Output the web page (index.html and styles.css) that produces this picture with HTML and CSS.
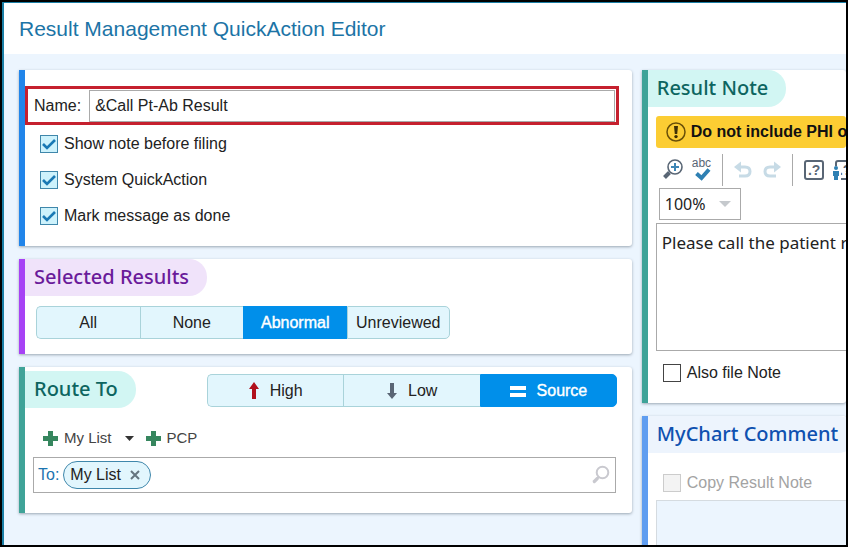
FILE: index.html
```html
<!DOCTYPE html>
<html lang="en">
<head>
<meta charset="utf-8">
<title>Result Management QuickAction Editor</title>
<link rel="stylesheet" href="styles.css">
</head>
<body>
<div class="window">
  <header class="titlebar"><h1>Result Management QuickAction Editor</h1></header>
  <main class="columns">
    <div class="column">
      <section class="panel panel-blue general">
        <div class="name-row">
          <label for="name">Name:</label>
          <input id="name" class="name-input" type="text" value="&amp;Call Pt-Ab Result">
        </div>
        <div class="checks">
          <label class="check"><input type="checkbox" checked>Show note before filing</label>
          <label class="check"><input type="checkbox" checked>System QuickAction</label>
          <label class="check"><input type="checkbox" checked>Mark message as done</label>
        </div>
      </section>

      <section class="panel panel-purple results">
        <h2 class="tag">Selected Results</h2>
        <div class="segments result-segments">
          <button type="button">All</button>
          <button type="button">None</button>
          <button type="button" class="active">Abnormal</button>
          <button type="button">Unreviewed</button>
        </div>
      </section>

      <section class="panel panel-teal route">
        <div class="route-head">
          <h2 class="tag">Route To</h2>
          <div class="segments route-segments">
            <button type="button"><svg width="10" height="18" viewBox="0 0 10 18"><path fill="#b0101c" d="M5 0l5 7H7v10H3V7H0z"/></svg>High</button>
            <button type="button"><svg width="10" height="18" viewBox="0 0 10 18"><path fill="#5a6675" d="M5 17l5-6H7V1H3v10H0z"/></svg>Low</button>
            <button type="button" class="active"><svg width="16" height="12" viewBox="0 0 16 12"><path fill="#fff" d="M0 1h16v4H0zM0 8h16v4H0z"/></svg>Source</button>
          </div>
        </div>
        <div class="adders">
          <button type="button"><svg width="15" height="15" viewBox="0 0 15 15"><path fill="#36865e" d="M5 0h5v5h5v5h-5v5H5v-5H0V5h5z"/></svg>My List</button>
          <button type="button" class="caret" aria-label="More lists"><svg width="9" height="5" viewBox="0 0 9 5"><path fill="#333" d="M0 0h9L4.500 5z"/></svg></button>
          <button type="button"><svg width="15" height="15" viewBox="0 0 15 15"><path fill="#36865e" d="M5 0h5v5h5v5h-5v5H5v-5H0V5h5z"/></svg>PCP</button>
        </div>
        <div class="recipients">
          <label for="to">To:</label>
          <span class="chip">My List<button type="button" aria-label="Remove My List"><svg width="10" height="10" viewBox="0 0 10 10"><path fill="none" stroke="#66757f" stroke-width="2" d="M1 1l8 8M9 1L1 9"/></svg></button></span>
          <input id="to" type="text">
          <svg width="18" height="20" viewBox="0 0 18 20"><circle cx="10.500" cy="7.500" r="5.800" fill="none" stroke="#c9c9cf" stroke-width="2"/><path stroke="#c9c9cf" stroke-width="3.200" stroke-linecap="round" d="M5.300 13.500L2.300 16.500"/><path stroke="#c9c9cf" stroke-width="1.500" d="M7 11.500l-2 2"/></svg>
        </div>
      </section>
    </div>

    <div class="column">
      <section class="panel panel-teal note">
        <h2 class="tag">Result Note</h2>
        <p class="warning"><svg width="20" height="20" viewBox="0 0 20 20"><circle cx="10" cy="10" r="9" fill="none" stroke="#6a5008" stroke-width="1.500"/><path fill="#3f3005" d="M8 4h4l-.8 8H8.800z"/><circle cx="10" cy="14.600" r="1.700" fill="#3f3005"/></svg>Do not include PHI or sensitive data</p>
        <div class="toolbar">
          <button type="button" aria-label="Zoom"><svg width="20" height="22" viewBox="0 0 20 22"><circle cx="12" cy="8" r="7" fill="#fff" stroke="#596675" stroke-width="1.600"/><path stroke="#3f86b5" stroke-width="2" d="M12 4v8M8 8h8"/><path stroke="#596675" stroke-width="4" d="M6.500 13.500L1.500 18.500"/></svg></button>
          <button type="button" class="spell" aria-label="Check spelling"><span>abc</span><svg width="16" height="13" viewBox="0 0 16 13"><path fill="none" stroke="#2f80b3" stroke-width="4" d="M1.500 5.500L6.500 10L14 1.500"/></svg></button>
          <i class="divider"></i>
          <button type="button" aria-label="Undo"><svg width="18" height="18" viewBox="0 0 18 18"><path fill="none" stroke="#c7dbe6" stroke-width="3" d="M3 6h8q5 0 5 4.500t-5 4.500H5"/><path fill="#c7dbe6" d="M0 6l7-5.500v11z"/></svg></button>
          <button type="button" aria-label="Redo"><svg width="18" height="18" viewBox="0 0 18 18"><path fill="none" stroke="#c7dbe6" stroke-width="3" d="M15 6H7q-5 0-5 4.500t5 4.500h6"/><path fill="#c7dbe6" d="M18 6l-7-5.500v11z"/></svg></button>
          <i class="divider"></i>
          <button type="button" class="glyph" aria-label="Insert placeholder">.?</button>
          <button type="button" class="glyph person" aria-label="Patient placeholder">.?<svg width="8" height="14" viewBox="0 0 8 14"><path fill="#fff" d="M0 0h8v14H0z"/><circle cx="3" cy="2" r="2" fill="#2f80b3"/><path fill="#2f80b3" d="M0 5h6v5H5v4H1v-4H0z"/></svg></button>
        </div>
        <select class="zoom" aria-label="Zoom level"><option>100%</option></select>
        <textarea class="note-text" aria-label="Result note">Please call the patient regarding results.</textarea>
        <label class="check"><input type="checkbox">Also file Note</label>
      </section>

      <section class="panel panel-sky comment">
        <h2 class="tag">MyChart Comment</h2>
        <label class="check"><input type="checkbox" disabled>Copy Result Note</label>
        <textarea class="comment-text" aria-label="MyChart comment" disabled></textarea>
      </section>
    </div>
  </main>
</div>
</body>
</html>
```
FILE: styles.css
```css
* { box-sizing: border-box; }
body {
  margin: 0;
  height: 100vh;
  padding: 2px;
  background: #000;
  color: #222;
  font: 16px/20px "Liberation Sans", Arial, sans-serif;
  overflow: hidden;
}
button, input, select, textarea { font: inherit; color: inherit; margin: 0; }
button { border: 0; padding: 0; background: none; }
svg { flex: none; display: block; }

.window {
  display: flex;
  flex-direction: column;
  height: 100%;
  overflow: hidden;
  background: #ecf5fe;
  border-top: 1px solid #1b7fa6;
  border-left: 2px solid #1b7fa6;
}
.titlebar { flex: none; height: 51px; padding: 14px 15px; background: #fff; }
h1 { margin: 0; font-size: 21px; line-height: 24px; font-weight: 400; color: #1c74a6; }
h2 { margin: 0; }

.columns {
  flex: 1;
  min-height: 0;
  display: grid;
  grid-template-columns: minmax(0, 3fr) minmax(0, 1fr);
  gap: 10px;
  padding: 16px 0 0 15px;
}
.column { display: flex; flex-direction: column; gap: 13px; min-width: 0; min-height: 0; }

.panel {
  flex: none;
  background: #fff;
  border-left: 6px solid;
  border-radius: 0 3px 3px 0;
  box-shadow: 0 1px 3px #9aa6b2;
}
.panel-blue { border-color: #2185ea; }
.panel-purple { border-color: #a742f5; }
.panel-teal { border-color: #3fa398; }
.panel-sky { border-color: #5f9df0; }

.tag {
  width: max-content;
  height: 37px;
  padding: 0 18px 0 9px;
  border-radius: 0 18px 18px 0;
  font: 500 20px/35px "Noto Sans", sans-serif;
}
.panel-purple .tag { background: #f0e3fa; color: #6a1b9a; }
.panel-teal .tag { background: #d2f6f3; color: #0d6560; }
.panel-sky .tag { background: #edf4fd; color: #0f51b0; }

.general { padding: 16px 13px 20px 0; }
.name-row {
  display: flex;
  align-items: center;
  gap: 8px;
  height: 39px;
  padding: 0 1px 0 6px;
  border: 3px solid #c5202e;
}
.name-input { flex: 1; min-width: 0; height: 32px; padding: 0 5px; border: 1px solid #aaa; background: #fff; }
.checks { display: flex; flex-direction: column; gap: 16px; padding: 9px 15px 0; }
.check { display: flex; align-items: center; gap: 6px; height: 20px; white-space: nowrap; }
.check input {
  flex: none;
  appearance: none;
  width: 18px;
  height: 18px;
  border: 1px solid #444;
  background: #fff;
}
.check input:checked {
  border-color: #3f87ab;
  background: #cdf2fc url("data:image/svg+xml,%3Csvg xmlns='http://www.w3.org/2000/svg' viewBox='0 0 16 16'%3E%3Cpath d='M2 8l4 4 8-8' fill='none' stroke='%231a79b5' stroke-width='2.600'/%3E%3C/svg%3E");
}
.check input:disabled { border-color: #ccc; background: #f3f3f3; }
.check:has(input:disabled) { color: #a3a3a3; }

.segments { display: grid; grid-auto-flow: column; grid-auto-columns: 1fr; height: 33px; }
.segments button {
  display: flex;
  align-items: center;
  justify-content: center;
  gap: 11px;
  border: 1px solid #a9d3da;
  border-right-width: 0;
  background: #e2f6fd;
}
.segments button:first-child { border-radius: 5px 0 0 5px; }
.segments button:last-child { border-radius: 0 5px 5px 0; border-right-width: 1px; }
.segments .active { background: #008fea; border-color: #008fea; color: #fff; -webkit-text-stroke: 0.4px #fff; }
.results { padding-bottom: 15px; }
.result-segments { width: 414px; margin: 10px 11px 0; }

.route { padding: 4px 16px 20px 0; }
.route-head { display: flex; justify-content: space-between; align-items: flex-start; }
.route-segments { width: 410px; margin-top: 3px; margin-right: -1px; }

.adders { display: flex; align-items: center; height: 20px; margin: 20px 18px 9px; font-size: 15px; color: #444; }
.adders button { display: flex; align-items: center; gap: 6px; }
.adders .caret { padding: 0 12px 0 13px; }
.recipients {
  display: flex;
  align-items: center;
  gap: 4px;
  height: 36px;
  margin-left: 8px;
  padding: 0 5px 0 4px;
  border: 1px solid #aaa;
}
.recipients label { color: #1c74b0; }
.recipients input { flex: 1; min-width: 0; border: 0; outline: 0; background: none; }
.chip {
  display: flex;
  align-items: center;
  gap: 9px;
  height: 28px;
  padding: 0 10px 0 6px;
  border: 1px solid #3f87ab;
  border-radius: 14px;
  background: #e2f6fd;
}

.note, .comment { white-space: nowrap; clip-path: inset(-4px 0 -4px -4px); }
.note { padding-bottom: 20px; }
.warning {
  display: flex;
  align-items: center;
  gap: 5px;
  height: 32px;
  margin: 9px 0 5px 8px;
  padding: 0 10px;
  border-radius: 3px;
  background: #fccd33;
  color: #111;
  font-weight: 700;
}
.toolbar { display: flex; align-items: center; height: 34px; gap: 11px; padding-left: 15px; }
.toolbar button { flex: none; }
.divider { flex: none; width: 1px; height: 32px; background: #aaa; }
.toolbar .spell { display: flex; flex-direction: column; align-items: flex-end; margin-left: -2px; font-size: 12px; line-height: 9px; color: #596675; }
.spell span { align-self: flex-start; }
.toolbar .glyph {
  width: 20px;
  height: 20px;
  border: 2px solid #596675;
  border-radius: 3px;
  font-weight: 700;
  font-size: 14px;
  line-height: 16px;
  color: #596675;
}
.person { position: relative; }
.person svg { position: absolute; left: -4px; bottom: -2px; }
.zoom {
  display: block;
  appearance: none;
  width: 82px;
  height: 32px;
  margin: 1px 0 3px 11px;
  padding: 0 5px;
  border: 1px solid #aaa;
  border-radius: 0;
  background: #fff url("data:image/svg+xml,%3Csvg xmlns='http://www.w3.org/2000/svg' viewBox='0 0 12 6'%3E%3Cpath d='M0 0h12L6 6z' fill='%23c5c9cd'/%3E%3C/svg%3E") no-repeat right 9px center / 12px 6px;
}
.zoom, .note-text { font-family: "Noto Sans", sans-serif; }
.note-text, .comment-text {
  display: block;
  width: calc(100% - 8px);
  height: 128px;
  margin-left: 8px;
  padding: 9px 5px;
  border: 1px solid #aaa;
  border-right: 0;
  border-radius: 0;
  resize: none;
  overflow: hidden;
  white-space: pre;
  background: #fff;
}
.note-text { padding-right: 0; font-size: 17px; }
.note .check { margin: 12px 0 0 15px; }
.comment { flex: 1; }
.comment .check { margin: 20px 0 7px 15px; }
.comment-text { background: #ecf5fe; border-color: #d5dbe0; }
```
